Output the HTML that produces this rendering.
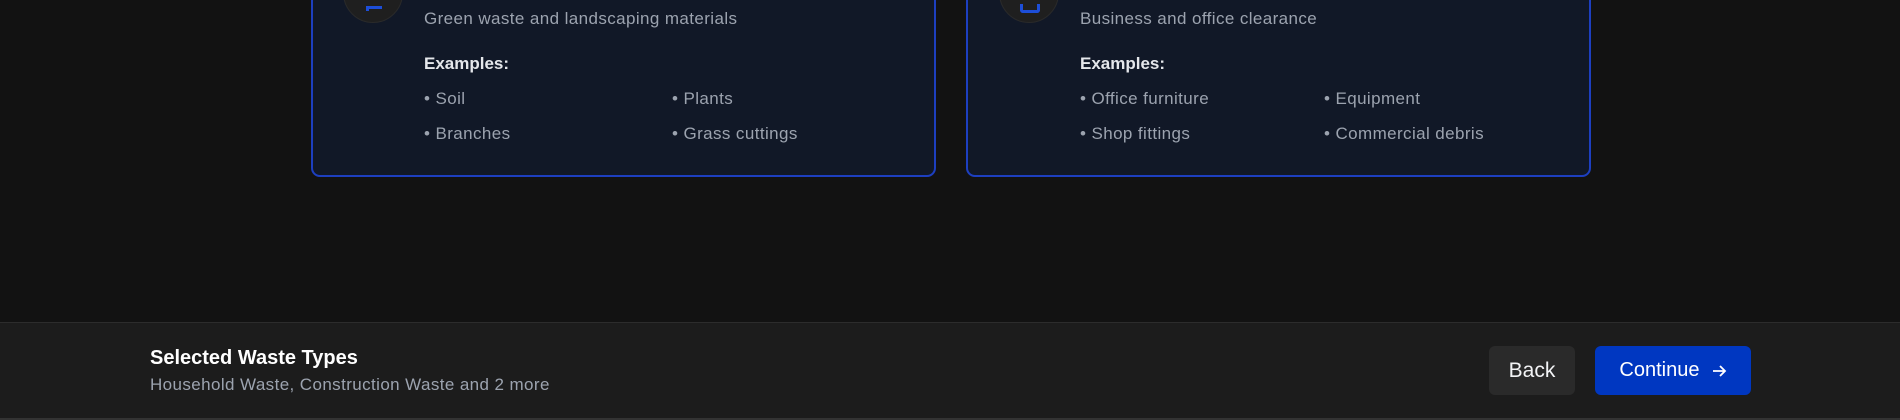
<!DOCTYPE html>
<html><head><style>
*{margin:0;padding:0;box-sizing:border-box}
body{width:1900px;height:420px;background:#121212;position:relative;overflow:hidden;font-family:"Liberation Sans",sans-serif}
.card{position:absolute;top:-40px;height:217px;border:2px solid #1d3fc0;border-radius:9px;background:#111827}
.circ{position:absolute;width:60px;height:60px;border-radius:50%;background:#1f1f1f;border:1px solid #2a2a2a;top:-37px}
.t{position:absolute;font-size:17px;color:#9ca3af;white-space:nowrap;letter-spacing:0.4px}
.ex{position:absolute;font-size:17px;color:#e5e7eb;font-weight:bold}
.foot{position:absolute;left:0;top:322px;width:1900px;height:96px;background:#1c1c1c;border-top:1px solid #2c2c2c}
.btm{position:absolute;left:0;top:418px;width:1900px;height:2px;background:#333}
.btn{position:absolute;top:346px;height:49px;border-radius:6px;color:#fff;font-size:20px;display:flex;align-items:center;justify-content:center}
</style></head><body>
<div class="card" style="left:311px;width:625px"></div>
<div class="card" style="left:966px;width:625px"></div>
<div class="circ" style="left:343px"><div style="position:absolute;left:22px;top:42px;width:16px;height:5px;border-top:3px solid #1d4ed8;border-left:3px solid #1d4ed8"></div></div>
<div class="circ" style="left:999px"><div style="position:absolute;left:20px;top:40px;width:20px;height:9px;border:3px solid #1d4ed8;border-top:none;border-radius:0 0 3px 3px"></div></div>

<div class="t" style="left:424px;top:9px">Green waste and landscaping materials</div>
<div class="ex" style="left:424px;top:54px">Examples:</div>
<div class="t" style="left:424px;top:89px">• Soil</div>
<div class="t" style="left:672px;top:89px">• Plants</div>
<div class="t" style="left:424px;top:124px">• Branches</div>
<div class="t" style="left:672px;top:124px">• Grass cuttings</div>

<div class="t" style="left:1080px;top:9px">Business and office clearance</div>
<div class="ex" style="left:1080px;top:54px">Examples:</div>
<div class="t" style="left:1080px;top:89px">• Office furniture</div>
<div class="t" style="left:1324px;top:89px">• Equipment</div>
<div class="t" style="left:1080px;top:124px">• Shop fittings</div>
<div class="t" style="left:1324px;top:124px">• Commercial debris</div>

<div class="foot"></div>
<div class="btm"></div>
<div style="position:absolute;left:150px;top:347px;font-size:20px;font-weight:bold;color:#fff">Selected Waste Types</div>
<div class="t" style="left:150px;top:375px">Household Waste, Construction Waste and 2 more</div>
<div class="btn" style="left:1489px;width:86px;background:#2a2a2a;font-size:21px;color:#f3f4f6">Back</div>
<div class="btn" style="left:1595px;width:156px;background:#0037c1">Continue&nbsp;&nbsp;<svg width="16" height="16" viewBox="0 0 16 16"><path d="M2 8h12M9 3l5 5-5 5" stroke="#fff" stroke-width="1.8" fill="none"/></svg></div>
</body></html>
